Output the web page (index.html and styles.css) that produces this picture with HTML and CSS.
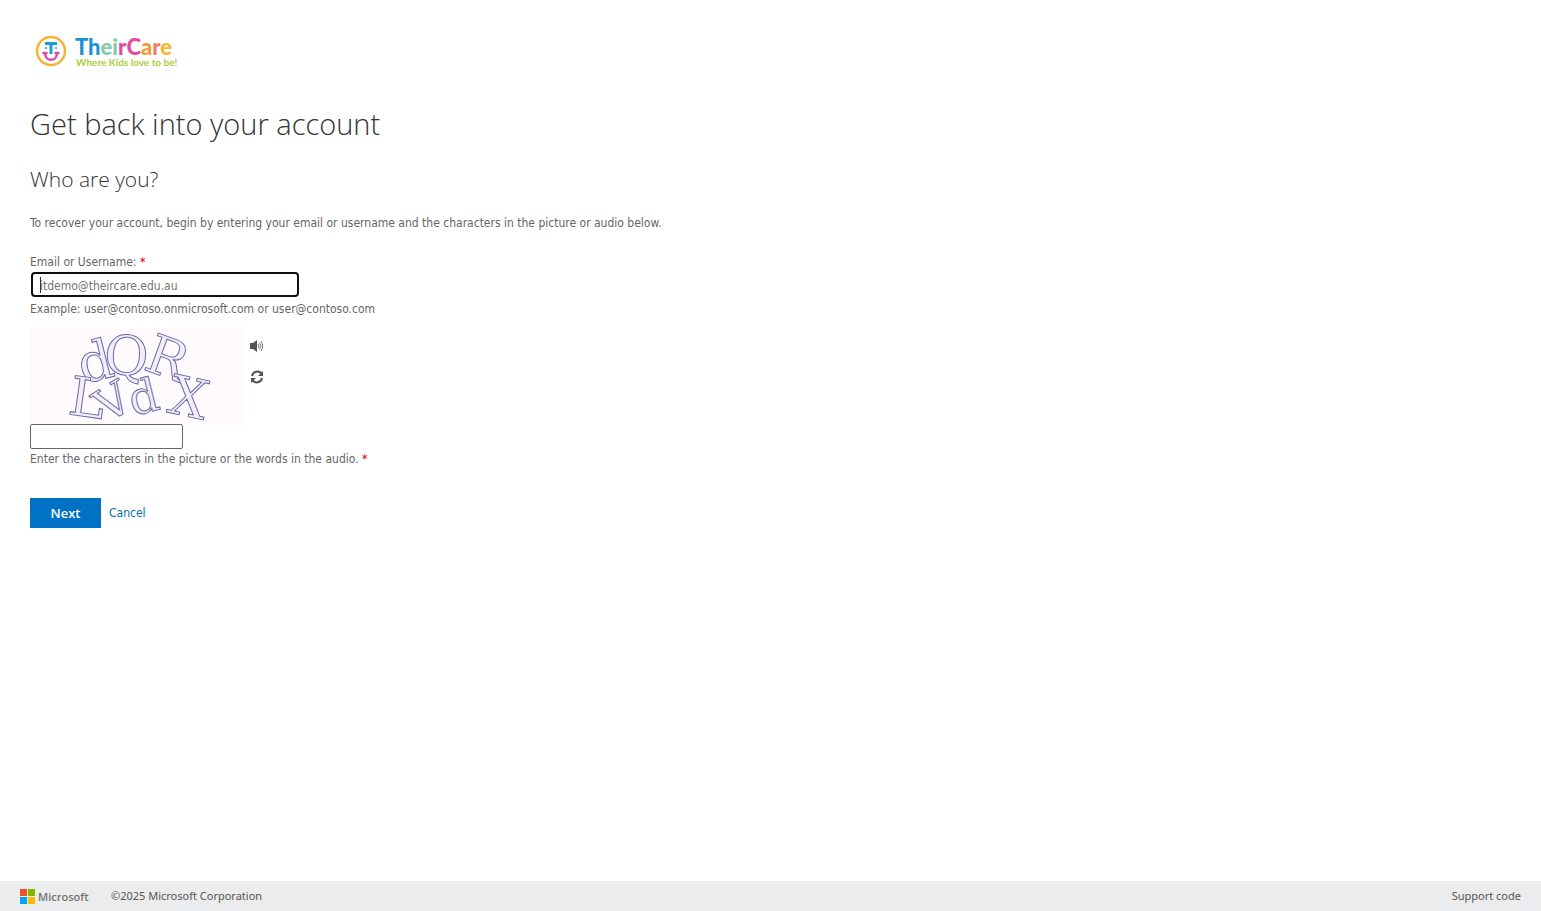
FILE: index.html
```html
<!doctype html>
<html lang="en">
<head>
<meta charset="UTF-8">
<title>Microsoft Online Password Reset</title>
<link rel="stylesheet" href="styles.css">
</head>
<body>

<main class="content">
<svg class="logo" width="150" height="42" viewBox="0 0 150 42" role="img" aria-label="TheirCare, where kids love to be!">
	<circle cx="21" cy="21" r="14" fill="none" stroke="#f5b335" stroke-width="2.500"/>
	<path d="M15 13.500h12M21 14v10" fill="none" stroke="#1b9cd8" stroke-width="3"/>
	<path d="M15 23c0 9 12 9 12 0M13.500 23h3M25.500 23h3" fill="none" stroke="#d94fa8" stroke-width="2.500" stroke-linecap="round"/>
	<circle cx="16" cy="18" r="1" fill="#1b9cd8"/>
	<circle cx="26" cy="18" r="1" fill="#1b9cd8"/>
	<text class="logo-name" x="45" y="25"><tspan fill="#1b93d2">Th</tspan><tspan fill="#86cba8">ei</tspan><tspan fill="#e5489d">rC</tspan><tspan fill="#f29c38">a</tspan><tspan fill="#f07a70">r</tspan><tspan fill="#f6b62e">e</tspan></text>
	<text class="logo-tag" x="46" y="36">Where Kids love to be!</text>
</svg>

<h1>Get back into your account</h1>
<h2>Who are you?</h2>

<p class="intro">To recover your account, begin by entering your email or username and the characters in the picture or audio below.</p>

<form>
<div class="field">
	<label for="username">Email or Username: <span class="required">*</span></label>
	<input class="username" id="username" type="text" placeholder="itdemo@theircare.edu.au">
	<p class="hint">Example: user@contoso.onmicrosoft.com or user@contoso.com</p>
</div>

<div class="captcha">
	<svg class="captcha-picture" width="215" height="96" viewBox="0 0 215 96" role="img" aria-label="Verification picture">
		<text class="big" transform="translate(53 56) rotate(-14)">d</text>
		<text class="big" transform="translate(73 45) rotate(4)">Q</text>
		<text class="big" transform="translate(112 41) rotate(20)">R</text>
		<text class="big" transform="translate(37 86) rotate(8)">L</text>
		<text class="mid" transform="translate(77 96) rotate(-32)">V</text>
		<text class="mid" transform="translate(103 88) rotate(-14)">d</text>
		<text class="big" transform="translate(136 84) rotate(12)">X</text>
	</svg>
	<div class="captcha-tools">
		<button type="button" class="tool" aria-label="Play audio">
			<svg width="16" height="16" viewBox="0 0 16 16" fill="none" stroke="#777" stroke-width="1">
				<path d="M1 5h3l4-3v12l-4-3H1z" fill="#555" stroke="none"/>
				<path d="M9 6q2 2 0 4M10.500 4.500q3 3.500 0 7M12 3q3.500 5 0 10"/>
			</svg>
		</button>
		<button type="button" class="tool" aria-label="New picture">
			<svg width="16" height="16" viewBox="0 0 16 16" fill="none" stroke="#555" stroke-width="2">
				<path d="M3 7c1-5 7-5.500 9.500-2.500M13 9c-1 5-7 5.500-9.500 2.500"/>
				<path d="M14 2v5H9zM2 14V9h5z" fill="#555" stroke="none"/>
			</svg>
		</button>
	</div>
</div>

<div class="field">
	<input class="answer" id="answer" type="text">
	<label for="answer">Enter the characters in the picture or the words in the audio. <span class="required">*</span></label>
</div>

<div class="actions">
	<button type="button" class="next">Next</button>
	<a href="#">Cancel</a>
</div>
</form>
</main>

<footer>
	<svg class="ms-logo" width="71" height="15" viewBox="0 0 71 15" role="img" aria-label="Microsoft">
		<path d="M0 0h7v7H0z" fill="#f25022"/>
		<path d="M8 0h7v7H8z" fill="#7fba00"/>
		<path d="M0 8h7v7H0z" fill="#00a4ef"/>
		<path d="M8 8h7v7H8z" fill="#ffb900"/>
		<text x="18" y="12">Microsoft</text>
	</svg>
	<span class="copyright">©2025 Microsoft Corporation</span>
	<a class="support" href="#">Support code</a>
</footer>

</body>
</html>
```
FILE: styles.css
```css
*{box-sizing:border-box;}
body{
  margin:0;
  min-height:100vh;
  display:flex;
  flex-direction:column;
  background:#fff;
  color:#666;
  font:12px/16px "Segoe UI","DejaVu Sans Condensed","Open Sans",sans-serif;
}
.content{flex:1;padding:30px 30px 20px;}
.logo,.ms-logo{display:block;overflow:visible;}
.logo-name{font:900 22px "Comic Sans MS","Lato",sans-serif;}
.logo-tag{font:bold 10px "Comic Sans MS","Lato",sans-serif;fill:#a9cf38;}

h1,h2{color:#333;font-family:"Segoe UI Light","Open Sans",sans-serif;font-weight:300;}
h1{margin:32px 0 0;font-size:29px;line-height:40px;}
h2{margin:20px 0 0;font-size:21px;line-height:30px;}
p{margin:0;}
.intro{margin:21px 0 23px;}

label{display:block;}
.required{color:#c00;}
input{
  display:block;
  height:25px;
  border:1px solid #666;
  border-radius:2px;
  padding:0 8px;
  background:#fff;
  color:#333;
  font:inherit;
}
input::placeholder{color:#757575;opacity:1;}
.username{
  width:268px;
  margin:2px 0 4px 1px;
  padding:2px 7px 0;
  border:2px solid #101010;
  border-radius:4px;
  outline:0;
  /* caret */
  background:linear-gradient(#333,#333) 7px 3px/1px 16px no-repeat #fff;
}
.answer{width:153px;margin-bottom:2px;}

.captcha{display:flex;margin-top:11px;}
.captcha-picture{display:block;overflow:visible;background:#fffafb;}
.captcha-picture text{fill:#f1eef7;stroke:#6b6bab;stroke-width:1px;font-family:"DejaVu Serif",serif;}
.captcha-picture .big{font-size:54px;}
.captcha-picture .mid{font-size:46px;}
.captcha-tools{display:flex;flex-direction:column;gap:15px;padding:10px 4px;}
.tool{width:16px;height:16px;border:0;padding:0;background:none;}
.tool svg{display:block;}

.actions{display:flex;align-items:center;gap:8px;margin-top:31px;}
.next{
  width:71px;
  height:30px;
  border:0;
  background:#0072c6;
  color:#fff;
  font:600 13px "Segoe UI","Open Sans",sans-serif;
}
a{color:#0072a6;text-decoration:none;}

footer{
  display:flex;
  align-items:center;
  height:30px;
  padding:0 20px;
  background:#ebeced;
  color:#555;
  font:11px/16px "Segoe UI","Noto Sans",sans-serif;
}
.ms-logo text{font:600 11px "Segoe UI","Open Sans",sans-serif;fill:#737373;}
.copyright{margin-left:20px;}
.support{margin-left:auto;color:#555;}
```
